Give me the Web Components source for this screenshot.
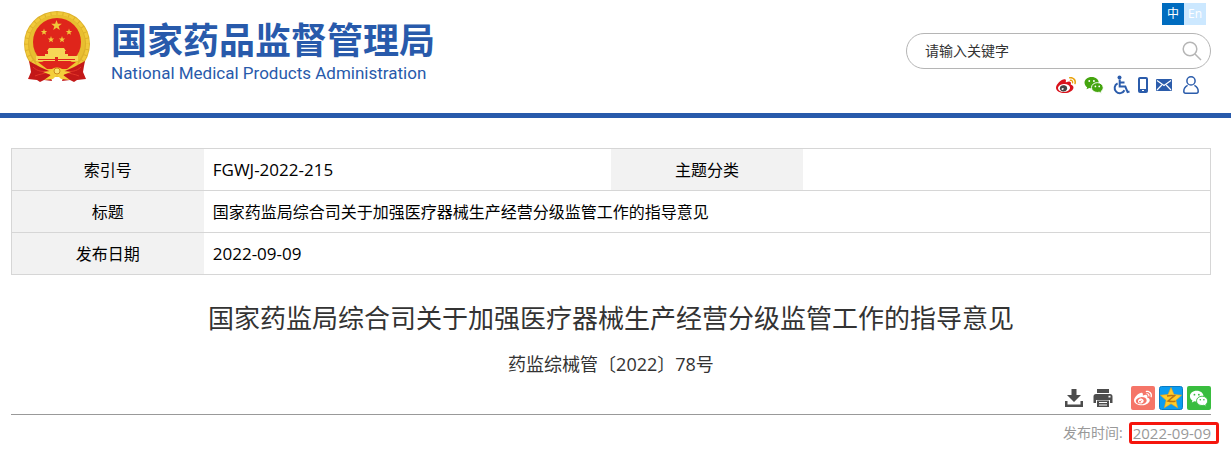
<!DOCTYPE html>
<html lang="zh-CN">
<head>
<meta charset="utf-8">
<title>国家药品监督管理局</title>
<style>
body{margin:0;background:#fff;color:#000;font-family:"Open Sans","Noto Sans CJK SC",sans-serif;font-size:16px}
</style>
</head>
<body>
<site-header>
  <site-brand slot="brand"></site-brand>
  <lang-switch slot="tools"></lang-switch>
  <search-box slot="tools"></search-box>
  <quick-links slot="tools"></quick-links>
</site-header>
<doc-page>
  <doc-meta slot="meta"></doc-meta>
  <span slot="title">国家药监局综合司关于加强医疗器械生产经营分级监管工作的指导意见</span>
  <span slot="number">药监综械管〔2022〕78号</span>
  <share-bar slot="share"></share-bar>
  <publish-date slot="date">2022-09-09</publish-date>
</doc-page>

<script>
const define = (name, html) => customElements.define(name, class extends HTMLElement {
  constructor() {
    super();
    this.attachShadow({mode: 'open'}).innerHTML = html;
  }
});

const weiboBody = 'M10.098 20.323c-3.977.391-7.414-1.406-7.672-4.02-.259-2.609 2.759-5.047 6.74-5.441 3.979-.394 7.413 1.404 7.671 4.018.259 2.6-2.759 5.049-6.737 5.439zM9.05 17.219c-.384.616-1.208.884-1.829.602-.612-.279-.793-.991-.406-1.593.379-.595 1.176-.861 1.793-.601.622.263.82.972.442 1.592zm1.27-1.627c-.141.237-.449.353-.689.253-.236-.09-.313-.361-.177-.586.138-.227.436-.346.672-.24.239.09.315.36.18.601zm.176-2.719c-1.893-.493-4.033.45-4.857 2.118-.836 1.704-.026 3.591 1.886 4.21 1.983.64 4.318-.341 5.132-2.179.8-1.793-.201-3.642-2.161-4.149zm7.563-1.224c-.346-.105-.57-.18-.405-.615.375-.977.42-1.804 0-2.404-.781-1.112-2.915-1.053-5.364-.03 0 0-.766.331-.571-.271.376-1.217.315-2.224-.27-2.809-1.338-1.337-4.869.045-7.888 3.08C1.309 10.87 0 13.273 0 15.348c0 3.981 5.099 6.395 10.086 6.395 6.536 0 10.888-3.801 10.888-6.82 0-1.822-1.547-2.854-2.915-3.284z';
const weiboWaves = 'M19.967 6.557c-.766-.856-1.908-1.187-2.96-.962-.436.09-.706.511-.616.932.09.42.511.691.932.602.511-.105 1.067.044 1.442.465.376.421.466.977.316 1.473-.136.406.089.856.51.992.405.119.857-.105.992-.512.33-1.021.12-2.178-.646-3.035zM22.385 4.362c-1.576-1.757-3.905-2.419-6.054-1.968-.496.104-.812.587-.706 1.081.104.496.586.813 1.082.707 1.532-.331 3.185.15 4.296 1.383 1.112 1.246 1.429 2.943.947 4.416-.165.48.106 1.007.586 1.157.479.165.991-.104 1.157-.586.675-2.088.241-4.478-1.338-6.235z';
const eyeDots = 'M9.05 17.219c-.384.616-1.208.884-1.829.602-.612-.279-.793-.991-.406-1.593.379-.595 1.176-.861 1.793-.601.622.263.82.972.442 1.592z';
const wechat = (fill, bg) => `
  <path fill="${fill}" d="M8 2C3.600 2 .5 4.700.5 8c0 2 1.100 3.700 2.800 4.800L2.600 15l2.900-1.400c.8.2 1.600.4 2.500.4 4.400 0 7.500-2.700 7.500-6S12.400 2 8 2z"/>
  <path fill="${fill}" stroke="${bg}" stroke-width="1" d="M14 8c-3.500 0-6.200 2.300-6.200 5.200s2.700 5.200 6.200 5.200c.7 0 1.400-.1 2-.3l2.600 1.300-.6-2.100c1.300-.9 2.200-2.400 2.200-4.100C20.200 10.300 17.500 8 14 8z"/>
  <g fill="${bg}"><circle cx="5.500" cy="6.300" r="1"/><circle cx="10.400" cy="6.300" r="1"/><circle cx="12" cy="12" r=".9"/><circle cx="16" cy="12" r=".9"/></g>`;

const icons = {
  weibo: `<svg viewBox="0 0 24 24" width="20" height="20"><ellipse cx="9.700" cy="15.600" rx="7.600" ry="5" fill="#fff"/><path fill="#d9121b" d="${weiboBody}"/><path fill="#e9a20c" d="${weiboWaves}"/><ellipse cx="9" cy="16" rx="4.300" ry="3.700" fill="#444"/><path fill="#fff" d="${eyeDots}"/></svg>`,
  wechat: `<svg viewBox="0 1 21 19" width="20" height="18">${wechat('#45a50f', '#fff')}</svg>`,
  access: `<svg viewBox="0 0 17 20" width="17" height="20" fill="none" stroke="#2b5cab" stroke-width="2"><circle cx="6.500" cy="2.400" r="2" fill="#2b5cab" stroke="none"/><path d="M6.700 4.500v7h5.600l2.300 5.600 1.900-.6M6.700 7.600h4.800M4.600 8.300a5.200 5.200 0 1 0 6.900 7"/></svg>`,
  phone: `<svg viewBox="0 0 10 16" width="10" height="16"><rect width="10" height="16" rx="2" fill="#2b5cab"/><path fill="#fff" d="M2 2h6v10H2zM4 13h2v1H4z"/></svg>`,
  mail: `<svg viewBox="0 0 16 12" width="16" height="12"><rect width="16" height="12" rx="1" fill="#2b5cab"/><path d="m1 1.500 7 5 7-5M1 11l4.800-5M15 11l-4.800-5" fill="none" stroke="#fff" stroke-width="1.200"/></svg>`,
  user: `<svg viewBox="0 0 16 18" width="16" height="18" fill="none" stroke="#2b5cab" stroke-width="1.500"><circle cx="8" cy="4.900" r="4.100"/><path d="M4.600 9.300C2.200 10.500.8 12.600.8 15.200c0 1.300.6 2 1.800 2h10.800c1.200 0 1.800-.7 1.800-2 0-2.600-1.400-4.700-3.800-5.900"/></svg>`,
  search: `<svg viewBox="0 0 20 20" width="20" height="20" fill="none" stroke="#b5b5b5" stroke-width="1.500"><circle cx="8" cy="8" r="6.800"/><path d="m13 13 6 6"/></svg>`,
  download: `<svg viewBox="0 0 20 20" width="20" height="20" fill="#4d4d4d"><path d="M7.500 1h5v6H17l-7 7-7-7h4.500z"/><path d="M1 13h2.500v3.500h13V13H19v6H1z"/></svg>`,
  print: `<svg viewBox="0 0 20 20" width="20" height="20" fill="#4d4d4d"><path d="M4 1h12v4H4z"/><path fill-rule="evenodd" d="M3 6h14a2.500 2.500 0 0 1 2.500 2.500V15H17v-3H3v3H.5V8.500A2.500 2.500 0 0 1 3 6zm12.500 1.700v1.800h2V7.700z"/><path fill-rule="evenodd" d="M4 12.500h12V19H4zM6 14v1h8v-1zm0 2.500v1h8v-1z"/></svg>`,
  shareWeibo: `<svg viewBox="0 0 24 24" width="24" height="24"><rect width="24" height="24" rx="2" fill="#f57568"/><g transform="translate(3 3) scale(.75)" fill="#fff"><path d="${weiboBody}"/><path d="${weiboWaves}"/></g></svg>`,
  shareQzone: `<svg viewBox="0 0 24 24" width="24" height="24"><rect x=".5" y=".5" width="23" height="23" rx="2" fill="#0b9cf0" stroke="#087cc4"/><path fill="#ffcc29" stroke="#f2a313" stroke-width=".6" d="m12 1.500 3 7 7.600.7-5.700 5.100 1.700 7.500-6.600-4-6.600 4 1.700-7.500L1.400 9.200 9 8.500z"/><path fill="none" stroke="#b87611" stroke-width="1.500" d="M8 10c3-.7 5-.6 7.500-.3L9 15c2.500.6 5 .6 7.500.2"/></svg>`,
  shareWechat: `<svg viewBox="0 0 24 24" width="24" height="24"><rect width="24" height="24" rx="2" fill="#39bd3f"/><g transform="translate(2.500 3) scale(.9)">${wechat('#fff', '#39bd3f')}</g></svg>`
};

customElements.define('ui-icon', class extends HTMLElement {
  connectedCallback() {
    if (this.shadowRoot) return;
    this.attachShadow({mode: 'open'}).innerHTML =
      `<style>:host{display:block}svg{display:block}</style>${icons[this.getAttribute('name')]}`;
  }
});

const star = (x, y, s) => `<path transform="translate(${x} ${y}) scale(${s})" d="m0-10 2.400 6.700 7.100.2-5.600 4.400 2 6.800L0 4.100l-5.900 4 2-6.800-5.600-4.400 7.100-.2z"/>`;

define('site-brand', `
<style>
:host{display:block}
a{display:flex;align-items:flex-start;gap:20px;color:#285aab;text-decoration:none}
svg{display:block}
.names{display:flex;flex-direction:column;padding-top:4px}
.cn{font:bold 36px/46px "Noto Sans CJK SC",sans-serif}
.en{font:17px/24px Roboto,"Liberation Sans",sans-serif}
</style>
<a href="#">
<svg viewBox="0 0 68 72" width="68" height="72" role="img" aria-label="国徽">
  <circle cx="34" cy="33" r="33" fill="#ddb12a"/>
  <circle cx="34" cy="33" r="30.500" fill="none" stroke="#f1c93a" stroke-width="3" stroke-dasharray="5 1"/>
  <circle cx="34" cy="32" r="26" fill="none" stroke="#e8be30" stroke-width="4"/>
  <circle cx="34" cy="31" r="24" fill="#df251b"/>
  <g fill="#f0c83a">${star(33.500, 14.500, .56)}${star(21, 21, .34)}${star(46, 21, .34)}${star(28, 28.500, .34)}${star(39, 28.500, .34)}</g>
  <path fill="#f6d557" d="M26 37h15l2 3H24zM25 40h17v3H25zM22 43h23v7H22zM13 45h42v5H13z"/>
  <path fill="#df251b" d="M15 48h37v1H15zM32 46h3v4h-3zM12 51h44l-4 4H16z"/>
  <path fill="#efc532" d="M12 51h44l-7 10-15 5-15-5z"/>
  <path fill="#df251b" d="M15 51h38l-9 7H24z"/>
  <path fill="#c31818" d="m6 50 11 6 9 4 3 10-8-1-4 2-3-2-9-1 3-7-1-6zM62 50l-11 6-9 4-3 10 8-1 4 2 3-2 9-1-3-7 1-6z"/>
  <path fill="none" stroke="#e23528" d="M10 56c5 5 9 4 15 5M12 65c4-2 9-2 13-4M58 56c-5 5-9 4-15 5M56 65c-4-2-9-2-13-4"/>
  <path fill="#f4cf3b" d="m20 61 7-1a8 7 0 0 1 14 0l7 1-8 3 7 5-9-1-4-4-4 4-9 1 7-5z"/>
  <circle cx="34" cy="60" r="3" fill="#fae56e" stroke="#cd8b1a"/>
</svg>
<span class="names"><span class="cn">国家药品监督管理局</span><span class="en">National Medical Products Administration</span></span>
</a>`);

define('lang-switch', `
<style>
:host{display:flex;margin-right:5px}
button{width:22px;height:22px;padding:0;border:0;color:#fff;background:#cce8ff;font:12px/22px "Open Sans","Noto Sans CJK SC",sans-serif;cursor:pointer}
.on{background:#006cbf}
</style>
<button class="on">中</button><button>En</button>`);

define('search-box', `
<style>
:host{display:block;width:305px;margin-top:8px}
form{display:flex;align-items:center;height:36px;box-sizing:border-box;border:1px solid #b5b5b5;border-radius:18px;padding:0 8px 0 18px}
input{flex:1;min-width:0;border:0;outline:0;padding:0;background:none;font:14px/20px "Open Sans","Noto Sans CJK SC",sans-serif}
input::placeholder{color:#333;opacity:1}
button{border:0;padding:0;background:none;cursor:pointer}
</style>
<form><input type="text" placeholder="请输入关键字" aria-label="请输入关键字"><button type="button" aria-label="搜索"><ui-icon name="search"></ui-icon></button></form>`);

define('quick-links', `
<style>
:host{display:flex;align-items:center;margin:6px 12px 0 0;height:20px}
div{display:flex;align-items:center;gap:8px;margin-right:9px}
div + div{margin-right:11px}
</style>
<div>
<a href="#" aria-label="微博"><ui-icon name="weibo"></ui-icon></a>
<a href="#" aria-label="微信"><ui-icon name="wechat"></ui-icon></a>
</div>
<div>
<a href="#" aria-label="无障碍"><ui-icon name="access"></ui-icon></a>
<a href="#" aria-label="手机版"><ui-icon name="phone"></ui-icon></a>
<a href="#" aria-label="邮箱"><ui-icon name="mail"></ui-icon></a>
</div>
<a href="#" aria-label="用户"><ui-icon name="user"></ui-icon></a>`);

define('site-header', `
<style>
:host{display:block;border-bottom:5px solid #285aab}
header{display:flex;justify-content:space-between;align-items:flex-start;padding:3px 20px 18px 23px}
.brand{padding-top:8px}
.tools{display:flex;flex-direction:column;align-items:flex-end}
</style>
<header><div class="brand"><slot name="brand"></slot></div><div class="tools"><slot name="tools"></slot></div></header>`);

define('doc-meta', `
<style>
:host{display:block}
table{width:100%;border-collapse:collapse;table-layout:fixed;border:1px solid #d6d6d6}
tr{border-bottom:1px solid #d6d6d6}
th,td{height:41px;padding:0;font-size:16px;line-height:24px;font-weight:400}
th{width:16%;background:#f2f2f2;text-align:center}
td{width:34%;padding-left:9px;box-sizing:border-box;text-align:left}
.num{font-size:17px}
</style>
<table>
<tr><th scope="row">索引号</th><td class="num">FGWJ-2022-215</td><th scope="row">主题分类</th><td></td></tr>
<tr><th scope="row">标题</th><td colspan="3">国家药监局综合司关于加强医疗器械生产经营分级监管工作的指导意见</td></tr>
<tr><th scope="row">发布日期</th><td colspan="3" class="num">2022-09-09</td></tr>
</table>`);

define('share-bar', `
<style>
:host{display:flex;justify-content:flex-end;align-items:center;gap:4px}
.tool{margin-right:5px}
.last{margin-right:14px}
</style>
<a href="#" aria-label="下载" class="tool"><ui-icon name="download"></ui-icon></a>
<a href="#" aria-label="打印" class="last"><ui-icon name="print"></ui-icon></a>
<a href="#" aria-label="分享到微博"><ui-icon name="shareWeibo"></ui-icon></a>
<a href="#" aria-label="分享到QQ空间"><ui-icon name="shareQzone"></ui-icon></a>
<a href="#" aria-label="分享到微信"><ui-icon name="shareWechat"></ui-icon></a>`);

define('publish-date', `
<style>
:host{display:flex;justify-content:flex-end;align-items:center;gap:6px;color:#999;font-size:14px;line-height:16px;margin-right:-8px}
time{border:3px solid #f5150d;border-radius:3px;padding:0 5px 0 1px;font-size:15px}
</style>
<span>发布时间:</span><time datetime="2022-09-09"><slot></slot></time>`);

define('doc-page', `
<style>
:host{display:block;padding:30px 20px 4px 11px}
h1{margin:23px 0 0;text-align:center;font-size:26px;line-height:40px;font-weight:400;color:#333}
p{margin:12px 0 0;text-align:center;font-size:18px;line-height:28px;color:#333}
.share{margin-top:8px;padding-bottom:4px;border-bottom:1px solid #999}
.date{margin-top:7px}
</style>
<main>
<slot name="meta"></slot>
<h1><slot name="title"></slot></h1>
<p><slot name="number"></slot></p>
<div class="share"><slot name="share"></slot></div>
<div class="date"><slot name="date"></slot></div>
</main>`);
</script>
</body>
</html>
